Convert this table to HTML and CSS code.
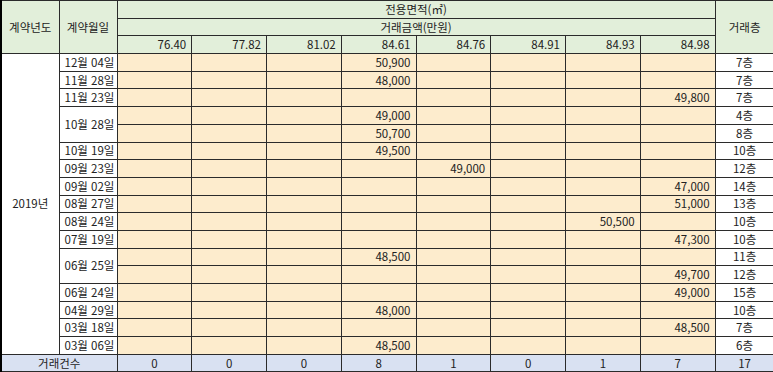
FILE: index.html
```html
<!DOCTYPE html>
<html lang="ko">
<head>
  <meta charset="UTF-8" />
  <title>실거래가</title>
  <link rel="stylesheet" href="styles.css">
</head>
<body>
  <table class="deals">
    <colgroup>
      <col class="c-year"><col class="c-date">
      <col class="c-area"><col class="c-area"><col class="c-area"><col class="c-area">
      <col class="c-area"><col class="c-area"><col class="c-area"><col class="c-area">
      <col class="c-floor">
    </colgroup>
    <thead>
      <tr>
        <th rowspan="3">계약년도</th>
        <th rowspan="3">계약월일</th>
        <th colspan="8">전용면적(㎡)</th>
        <th rowspan="3">거래층</th>
      </tr>
      <tr>
        <th colspan="8">거래금액(만원)</th>
      </tr>
      <tr class="areas">
        <th>76.40</th><th>77.82</th><th>81.02</th><th>84.61</th>
        <th>84.76</th><th>84.91</th><th>84.93</th><th>84.98</th>
      </tr>
    </thead>
    <tbody>
      <tr>
        <td class="year" rowspan="17">2019년</td>
        <td class="date">12월 04일</td>
        <td class="p"></td><td class="p"></td><td class="p"></td><td class="p">50,900</td>
        <td class="p"></td><td class="p"></td><td class="p"></td><td class="p"></td>
        <td class="floor">7층</td>
      </tr>
      <tr>
        <td class="date">11월 28일</td>
        <td class="p"></td><td class="p"></td><td class="p"></td><td class="p">48,000</td>
        <td class="p"></td><td class="p"></td><td class="p"></td><td class="p"></td>
        <td class="floor">7층</td>
      </tr>
      <tr>
        <td class="date">11월 23일</td>
        <td class="p"></td><td class="p"></td><td class="p"></td><td class="p"></td>
        <td class="p"></td><td class="p"></td><td class="p"></td><td class="p">49,800</td>
        <td class="floor">7층</td>
      </tr>
      <tr>
        <td class="date" rowspan="2">10월 28일</td>
        <td class="p"></td><td class="p"></td><td class="p"></td><td class="p">49,000</td>
        <td class="p"></td><td class="p"></td><td class="p"></td><td class="p"></td>
        <td class="floor">4층</td>
      </tr>
      <tr>
        <td class="p"></td><td class="p"></td><td class="p"></td><td class="p">50,700</td>
        <td class="p"></td><td class="p"></td><td class="p"></td><td class="p"></td>
        <td class="floor">8층</td>
      </tr>
      <tr>
        <td class="date">10월 19일</td>
        <td class="p"></td><td class="p"></td><td class="p"></td><td class="p">49,500</td>
        <td class="p"></td><td class="p"></td><td class="p"></td><td class="p"></td>
        <td class="floor">10층</td>
      </tr>
      <tr>
        <td class="date">09월 23일</td>
        <td class="p"></td><td class="p"></td><td class="p"></td><td class="p"></td>
        <td class="p">49,000</td><td class="p"></td><td class="p"></td><td class="p"></td>
        <td class="floor">12층</td>
      </tr>
      <tr>
        <td class="date">09월 02일</td>
        <td class="p"></td><td class="p"></td><td class="p"></td><td class="p"></td>
        <td class="p"></td><td class="p"></td><td class="p"></td><td class="p">47,000</td>
        <td class="floor">14층</td>
      </tr>
      <tr>
        <td class="date">08월 27일</td>
        <td class="p"></td><td class="p"></td><td class="p"></td><td class="p"></td>
        <td class="p"></td><td class="p"></td><td class="p"></td><td class="p">51,000</td>
        <td class="floor">13층</td>
      </tr>
      <tr>
        <td class="date">08월 24일</td>
        <td class="p"></td><td class="p"></td><td class="p"></td><td class="p"></td>
        <td class="p"></td><td class="p"></td><td class="p">50,500</td><td class="p"></td>
        <td class="floor">10층</td>
      </tr>
      <tr>
        <td class="date">07월 19일</td>
        <td class="p"></td><td class="p"></td><td class="p"></td><td class="p"></td>
        <td class="p"></td><td class="p"></td><td class="p"></td><td class="p">47,300</td>
        <td class="floor">10층</td>
      </tr>
      <tr>
        <td class="date" rowspan="2">06월 25일</td>
        <td class="p"></td><td class="p"></td><td class="p"></td><td class="p">48,500</td>
        <td class="p"></td><td class="p"></td><td class="p"></td><td class="p"></td>
        <td class="floor">11층</td>
      </tr>
      <tr>
        <td class="p"></td><td class="p"></td><td class="p"></td><td class="p"></td>
        <td class="p"></td><td class="p"></td><td class="p"></td><td class="p">49,700</td>
        <td class="floor">12층</td>
      </tr>
      <tr>
        <td class="date">06월 24일</td>
        <td class="p"></td><td class="p"></td><td class="p"></td><td class="p"></td>
        <td class="p"></td><td class="p"></td><td class="p"></td><td class="p">49,000</td>
        <td class="floor">15층</td>
      </tr>
      <tr>
        <td class="date">04월 29일</td>
        <td class="p"></td><td class="p"></td><td class="p"></td><td class="p">48,000</td>
        <td class="p"></td><td class="p"></td><td class="p"></td><td class="p"></td>
        <td class="floor">10층</td>
      </tr>
      <tr>
        <td class="date">03월 18일</td>
        <td class="p"></td><td class="p"></td><td class="p"></td><td class="p"></td>
        <td class="p"></td><td class="p"></td><td class="p"></td><td class="p">48,500</td>
        <td class="floor">7층</td>
      </tr>
      <tr>
        <td class="date">03월 06일</td>
        <td class="p"></td><td class="p"></td><td class="p"></td><td class="p">48,500</td>
        <td class="p"></td><td class="p"></td><td class="p"></td><td class="p"></td>
        <td class="floor">6층</td>
      </tr>
    </tbody>
    <tfoot>
      <tr>
        <td colspan="2">거래건수</td>
        <td>0</td><td>0</td><td>0</td><td>8</td>
        <td>1</td><td>0</td><td>1</td><td>7</td>
        <td>17</td>
      </tr>
    </tfoot>
  </table>
</body>
</html>
```

FILE: styles.css
```css
:root {
  --head-green: #e2efda;
  --price-bg: #fdeccd;
  --total-blue: #d9e1f2;
  --line: #2b2b2b;
}

body {
  margin: 0;
  background: white;
  font-family: "Noto Sans CJK KR", "Noto Sans", sans-serif;
  font-size: 11.5px;
  color: #222;
}

.deals {
  width: 773px;
  table-layout: fixed;
  border-collapse: collapse;
  border-left: 2px solid #000;
}

.c-year, .c-date { width: 58px; }
.c-area { width: 74.75px; }
.c-floor { width: 59px; }

.deals tr {
  height: 17.7px;
}

.deals th,
.deals td {
  border: 1px solid var(--line);
  padding: 0 5px;
  line-height: 15px;
  white-space: nowrap;
  overflow: hidden;
}

.deals th {
  background: var(--head-green);
  font-weight: normal;
  text-align: center;
}

.deals .areas th {
  text-align: right;
}

.year {
  text-align: center;
  background: white;
}

.date {
  text-align: center;
  padding: 0 1px;
}

.deals td.p {
  background: var(--price-bg);
  text-align: right;
}

.floor {
  text-align: center;
}

.deals tfoot td {
  background: var(--total-blue);
  text-align: center;
}
```
